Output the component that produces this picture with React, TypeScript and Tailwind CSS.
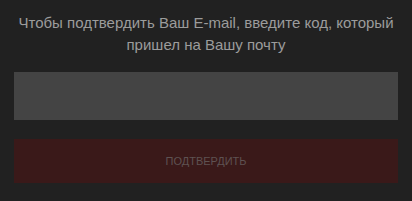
export default function App() {
  return (
    <div
      className="w-[412px] h-[201px] bg-[#212121] px-[14px] pt-[12px]"
      style={{ fontFamily: '"Liberation Sans", Arial, sans-serif' }}
    >
      <p className="text-center text-[15px] leading-[22px] text-[#9c9c9c]">
        Чтобы подтвердить Ваш E-mail, введите код, который пришел на Вашу почту
      </p>
      <input
        type="text"
        className="mt-[16px] block w-full h-[48px] bg-[#444444] outline-none border-0"
      />
      <button className="mt-[19px] block w-full h-[44px] bg-[#3a1919] text-[11px] text-[#5e5252] uppercase">
        Подтвердить
      </button>
    </div>
  );
}
